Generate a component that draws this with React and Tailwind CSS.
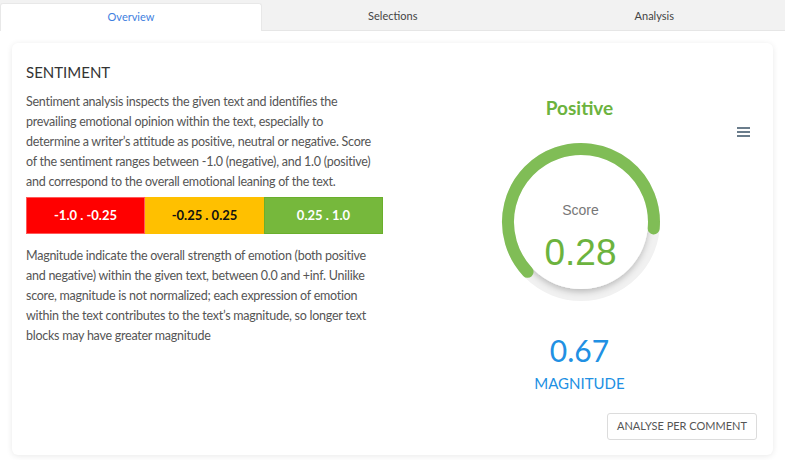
import React from "react";

const tabs = ["Overview", "Selections", "Analysis"];

const ranges = [
  { label: "-1.0 . -0.25", cls: "bg-[#ff0000] border-[#ff5a5a] text-white" },
  { label: "-0.25 . 0.25", cls: "bg-[#ffc000] border-[#ffc000] text-[#111]" },
  { label: "0.25 . 1.0", cls: "bg-[#76b83c] border-[#6aaf2c] text-white" },
];

function Gauge({ score }) {
  return (
    <div className="relative w-[170px] h-[170px]">
      <svg width="170" height="170" viewBox="0 0 170 170">
        <defs>
          <filter id="innerShadow" x="-20%" y="-20%" width="140%" height="140%">
            <feDropShadow dx="0" dy="3" stdDeviation="3" floodColor="#000" floodOpacity="0.22" />
          </filter>
        </defs>
        <circle cx="85" cy="85" r="73" fill="none" stroke="#f1f1f1" strokeWidth="12" />
        <circle cx="85" cy="85" r="67" fill="#fff" filter="url(#innerShadow)" />
        <path
          d="M 31.6 134.8 A 73 73 0 1 1 157.7 91.4"
          fill="none"
          stroke="#80bd56"
          strokeWidth="12"
          strokeLinecap="round"
        />
      </svg>
      <div className="absolute inset-0 flex flex-col items-center pt-[65px] font-['Liberation_Sans',Arial,sans-serif]">
        <div className="text-[14px] leading-[16px] text-[#777]">Score</div>
        <div className="mt-[14px] text-[37px] leading-[42px] text-[#6cb33e]">{score}</div>
      </div>
    </div>
  );
}

function App() {
  return (
    <div className="w-[800px] h-[460px] bg-white font-['Lato','Noto_Sans',sans-serif] overflow-hidden">
      {/* Tabs */}
      <div className="w-[785px] h-[31px] bg-[#f2f2f2] border-b border-[#e6e6e6] flex">
        {tabs.map((t, i) => (
          <div
            key={t}
            className={
              i === 0
                ? "w-[262px] mt-[3px] h-[28px] bg-white border border-b-0 border-[#e8e8e8] rounded-t-[3px] flex items-center justify-center text-[11px] text-[#3f7fe0]"
                : "flex-1 flex items-center justify-center pt-[3px] text-[11px] text-[#444]"
            }
          >
            {t}
          </div>
        ))}
      </div>

      {/* Card */}
      <div className="relative ml-[12px] mt-[12px] w-[761px] bg-white rounded-[6px] shadow-[0_1px_6px_rgba(0,0,0,0.09)] flex">
        <div className="w-[372px] pl-[14px] pt-[20px]">
          <h2 className="text-[15px] leading-[18px] text-[#333]">SENTIMENT</h2>
          <p className="mt-[11px] w-[352px] text-[12.5px] tracking-[-0.25px] leading-[20px] text-[#555]">
            Sentiment analysis inspects the given text and identifies the prevailing emotional opinion within the text, especially to determine a writer’s attitude as positive, neutral or negative. Score of the sentiment ranges between -1.0 (negative), and 1.0 (positive) and correspond to the overall emotional leaning of the text.
          </p>
          <div className="mt-[5px] w-[357px] h-[37px] flex">
            {ranges.map((r) => (
              <div
                key={r.label}
                className={"flex-1 flex items-center justify-center border text-[13px] font-bold " + r.cls}
              >
                {r.label}
              </div>
            ))}
          </div>
          <p className="mt-[12px] text-[12.5px] tracking-[-0.25px] leading-[20px] text-[#555]">
            Magnitude indicate the overall strength of emotion (both positive and negative) within the given text, between 0.0 and +inf. Unilike score, magnitude is not normalized; each expression of emotion within the text contributes to the text’s magnitude, so longer text blocks may have greater magnitude
          </p>
        </div>

        <div className="flex-1 flex flex-col items-center pt-[53px] pb-[15px]">
          <div className="pl-[2px] text-[19px] leading-[23px] font-bold text-[#6cb33e]">Positive</div>
          <div className="mt-[18px] pl-[4px]">
            <Gauge score="0.28" />
          </div>
          <div className="mt-[26px] pl-[2px] text-[30px] leading-[34px] text-[#2190e3]">0.67</div>
          <div className="mt-[7px] pl-[2px] text-[15px] leading-[18px] text-[#2190e3]">MAGNITUDE</div>
          <button className="mt-[21px] self-end mr-[16px] h-[27px] px-[9px] border border-[#dcdcdc] rounded-[3px] text-[11px] text-[#555] bg-white">
            ANALYSE PER COMMENT
          </button>
        </div>

        {/* chart menu */}
        <div className="absolute left-[725px] top-[84px] w-[13px] flex flex-col gap-[2.5px]">
          <div className="h-[1.5px] bg-[#6b7d8c]" />
          <div className="h-[1.5px] bg-[#6b7d8c]" />
          <div className="h-[1.5px] bg-[#6b7d8c]" />
        </div>
      </div>
    </div>
  );
}

export default App;
